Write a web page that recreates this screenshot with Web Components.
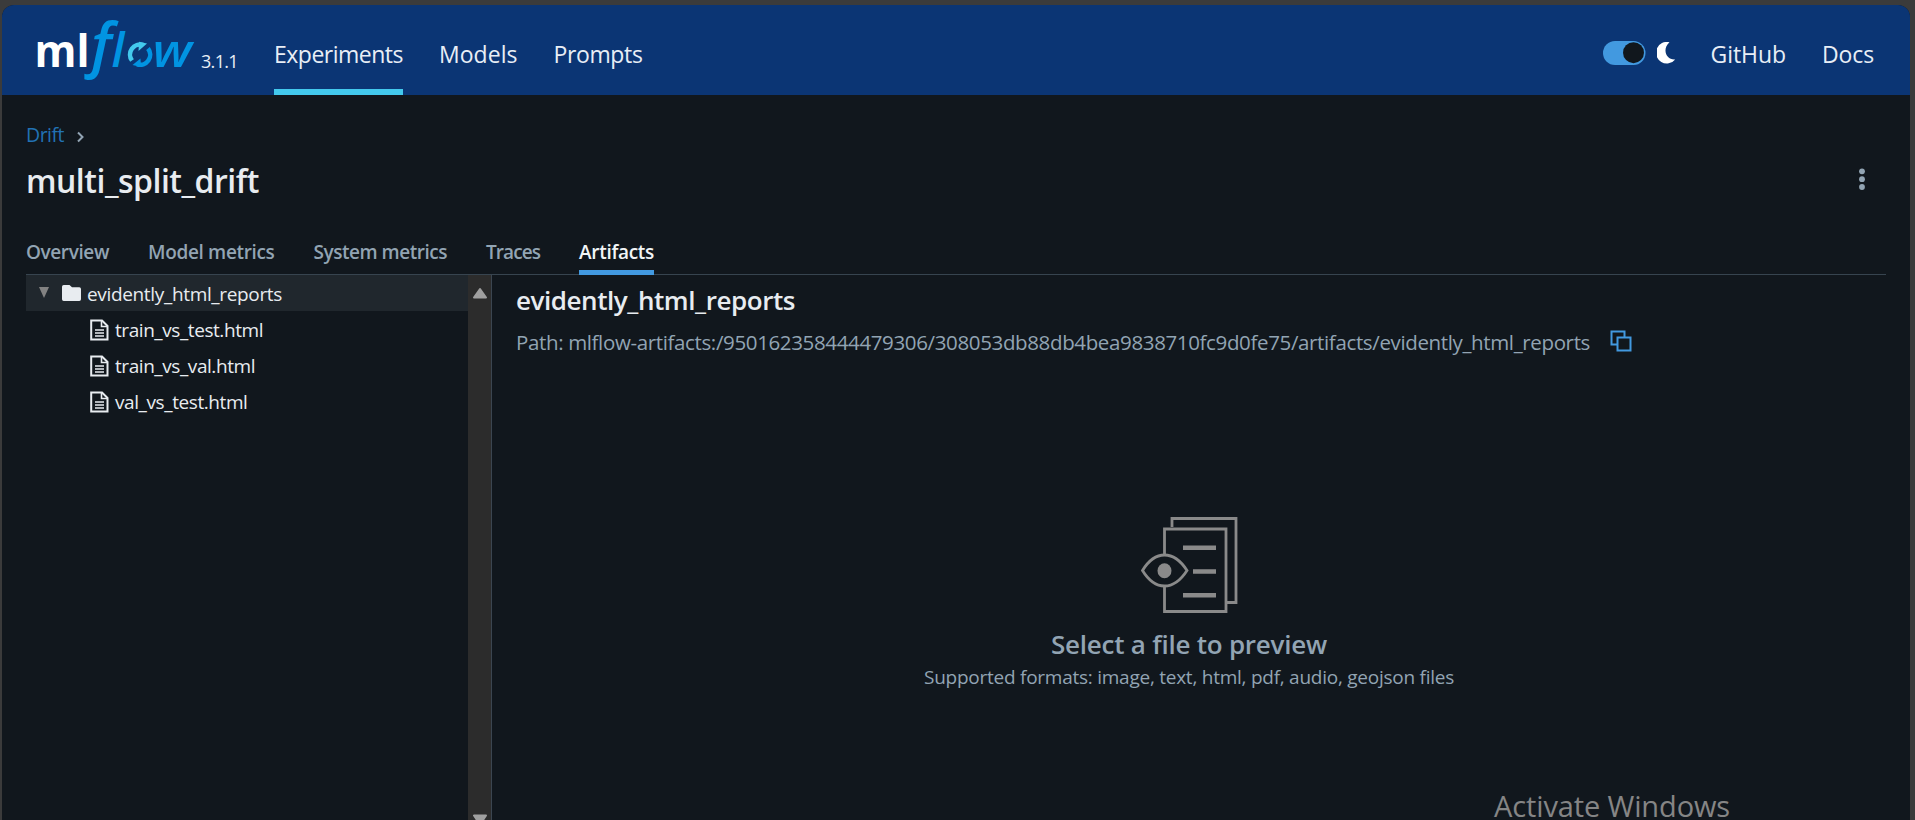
<!DOCTYPE html>
<html lang="en">
<head>
<meta charset="utf-8">
<title>multi_split_drift - MLflow</title>
<style>
html,body{margin:0;height:100%;overflow:hidden;background:#3b3b3b;font-family:"Open Sans","Noto Sans",sans-serif}
</style>
</head>
<body>
<ml-app></ml-app>
<script>
const define=(name,html,ready)=>customElements.define(name,class extends HTMLElement{
  connectedCallback(){
    if(this.shadowRoot)return;
    this.attachShadow({mode:'open'}).innerHTML=html;
    if(ready)ready(this,this.shadowRoot);
  }
});

/* One line of text; spacing is spread so that the line is `w` pixels wide. */
define('fit-text','<style>:host{display:block;white-space:nowrap;flex:none}span{display:inline-block}</style><span><slot></slot></span>',(el,root)=>{
  const span=root.querySelector('span'),w=+el.getAttribute('w'),n=el.textContent.length;
  span.style.letterSpacing=((w-span.getBoundingClientRect().width)/n)+'px';
  el.style.width=w+'px';
});

define('ml-logo',`<style>:host{display:block;width:164px;height:70px;flex:none}svg{display:block;overflow:visible}text{font-family:"Open Sans","Noto Sans",sans-serif}</style>
<svg width="164" height="70" viewBox="34 15 164 70">
<text x="34.500" y="67" font-size="45" font-weight="700" fill="#fff" textLength="55" lengthAdjust="spacingAndGlyphs">ml</text>
<g fill="#0194e2" font-style="italic" font-weight="600">
<text x="91" y="65.500" font-size="60">f</text>
<text x="111.500" y="67" font-size="47">l</text>
<text x="152.500" y="67" font-size="45" textLength="39.500" lengthAdjust="spacingAndGlyphs">w</text></g>
<path d="M132 60.500A10 10 0 0 1 143 45" fill="none" stroke="#43c9ed" stroke-width="4.600"/>
<path fill="#43c9ed" d="M139 41.800 147 43.500 138.500 51z"/>
<path d="M148 48.500A10 10 0 0 1 137 64.200" fill="none" stroke="#0194e2" stroke-width="4.600"/>
<path fill="#0194e2" d="M132.500 65 140.500 58.500 141 67z"/>
</svg>`);

define('ml-header',`<style>
:host{display:flex;box-sizing:border-box;height:90px;background:#0b3574;border-radius:12px 12px 0 0;padding:0 36px 0 32px;color:#e8eef6;font-size:23px;align-items:flex-start}
.tab{height:84px;margin-right:36px;line-height:98px}
.tab.on{border-bottom:6px solid #43c9ed}
ml-logo{margin-top:10px}
.ver{font-size:18px;line-height:112px;margin:0 36px 0 3px}
.grow{flex:1}
.tog{margin:36px 11px 0 0}.moon{margin:37px 35px 0 0}svg{display:block}
.doc{margin-left:36px}
.l{line-height:98px}
</style>
<ml-logo></ml-logo><fit-text class="ver" w="37">3.1.1</fit-text>
<fit-text class="tab on" w="129">Experiments</fit-text><fit-text class="tab" w="78.5">Models</fit-text><fit-text class="tab" w="89">Prompts</fit-text>
<div class="grow"></div>
<svg class="tog" width="43" height="24"><rect width="42.500" height="24" rx="12" fill="#4299e0"/><circle cx="30.500" cy="11.700" r="10.500" fill="#11171d"/></svg>
<svg class="moon" width="19" height="22"><path fill="#fff" d="M12.500.3A10.800 10.800 0 1 0 18.200 17.500C9.500 18.300 4.500 7.500 12.500.3z"/></svg>
<fit-text class="l" w="75.500">GitHub</fit-text><fit-text class="l doc" w="52">Docs</fit-text>`);

define('page-title',`<style>
:host{display:flex;justify-content:space-between;height:134px;padding:0 45px 0 24px}
.crumb{display:flex;height:54px;padding-top:14px;box-sizing:border-box;color:#2272b4;font-size:19.5px;line-height:52px;gap:12px}
.crumb svg{margin-top:22px}
.name{font-size:32px;font-weight:600;color:#e8ecf0;line-height:64px}
.more{margin-top:72px}
</style>
<div><div class="crumb"><fit-text w="38">Drift</fit-text><svg width="9" height="12"><path d="M2 1.500 6.500 6 2 10.500" fill="none" stroke="#92a4b3" stroke-width="2"/></svg></div>
<fit-text class="name" w="233">multi_split_drift</fit-text></div>
<svg class="more" width="6" height="26" fill="#92a4b3"><circle cx="3" cy="4.300" r="2.900"/><circle cx="3" cy="12.200" r="2.900"/><circle cx="3" cy="20" r="2.900"/></svg>`);

define('tab-strip',`<style>
:host{display:flex;box-sizing:border-box;height:46px;margin:0 24px 0 24px;border-bottom:1px solid #37444f;gap:39px;color:#92a4b3;font-size:19px;font-weight:600;line-height:47px}
.on{color:#f2f5f7;height:41px;border-bottom:5px solid #4299e0}
</style>
<fit-text w="83">Overview</fit-text><fit-text w="126.500">Model metrics</fit-text><fit-text w="133.500">System metrics</fit-text><fit-text w="54">Traces</fit-text><fit-text class="on" w="75">Artifacts</fit-text>`);

define('tree-file',`<style>:host{display:flex;height:36px;padding-left:64px;gap:6px;align-items:flex-start}svg{margin-top:7px}slot{display:block}</style>
<svg width="19" height="22" fill="none" stroke="#e8ecf0" stroke-width="2"><path d="M1.200 1.500H12L17.500 7V20.500H1.200z"/><path d="M11.500 2V7.500H17M5 11H14M5 14H14M5 17H14" stroke-width="1.600"/></svg><slot></slot>`);

define('artifact-tree',`<style>
:host{display:flex;width:465px;border-right:1px solid #3b4550;color:#e8ecf0;font-size:19px;line-height:37px}
.list{flex:1}
.dir{display:flex;height:36px;background:#20272d;padding-left:13px;margin-bottom:1px}
.dir fit-text{line-height:38px}
.arrow{margin:12px 13px 0 0}.folder{margin:10px 6px 0 0}
.bar{width:23px;background:#2c2c2c;display:flex;flex-direction:column;justify-content:space-between;align-items:center}
</style>
<div class="list"><div class="dir"><svg class="arrow" width="10" height="11"><path d="M0 0H10L5 11z" fill="#828282"/></svg>
<svg class="folder" width="19" height="17"><path fill="#e8ecf0" d="M1.700 0H7.500L10 2.200H17.300Q19 2.200 19 4V14.300Q19 16 17.300 16H1.700Q0 16 0 14.300V1.700Q0 0 1.700 0z"/></svg>
<fit-text w="195">evidently_html_reports</fit-text></div>
<tree-file><fit-text w="148">train_vs_test.html</fit-text></tree-file><tree-file><fit-text w="140">train_vs_val.html</fit-text></tree-file><tree-file><fit-text w="132.500">val_vs_test.html</fit-text></tree-file></div>
<div class="bar"><svg width="16" height="26"><path d="M8 14 14 22.500H2z" fill="#a0a0a0" stroke="#a0a0a0" stroke-width="2" stroke-linejoin="round"/></svg>
<svg width="16" height="7"><path d="M2 2.500H14L8 11.500z" fill="#a0a0a0" stroke="#a0a0a0" stroke-width="2" stroke-linejoin="round"/></svg></div>`);

define('artifact-view',`<style>
:host{display:flex;flex-direction:column;flex:1;padding-left:24px;color:#92a4b3}
h2{margin:0;font-size:26px;font-weight:600;color:#e8ecf0;line-height:50px;height:50px}
.path{display:flex;font-size:20.500px;line-height:34px;height:36px;gap:20px}.path svg{margin-top:5px}
.empty{display:flex;flex-direction:column;align-items:center;width:1346px;margin-top:156px}
.big{font-size:26px;font-weight:600;line-height:42px;margin-top:9px}
.sub{font-size:19px;line-height:32px;margin-top:-4px}
</style>
<h2><fit-text w="279">evidently_html_reports</fit-text></h2>
<div class="path"><fit-text w="1074">Path: mlflow-artifacts:/950162358444479306/308053db88db4bea9838710fc9d0fe75/artifacts/evidently_html_reports</fit-text>
<svg width="22" height="22" fill="none" stroke="#4299e0" stroke-width="2"><path d="M7 14.500H1.500V1.500H14.500V7"/><path d="M7.500 7.500H20.500V20.500H7.500z"/></svg></div>
<div class="empty">
<svg width="97" height="97" fill="none" stroke="#8a8a8a" stroke-width="2.800"><path d="M31 10V1.500H95V85.500H86"/><path d="M23.500 37V12H85V94.500H23.500V69"/><path d="M1.500 53.500Q11 38 23.500 38T46 53.500Q36 69 23.500 69T1.500 53.500z"/><ellipse cx="23.500" cy="53.700" rx="7" ry="7.500" fill="#8a8a8a" stroke="none"/><path stroke-width="4.500" d="M42 30.700H75M52 54.500H75M42 78.200H75"/></svg>
<fit-text class="big" w="276">Select a file to preview</fit-text>
<fit-text class="sub" w="530">Supported formats: image, text, html, pdf, audio, geojson files</fit-text></div>`);

define('ml-app',`<style>
:host{display:block;box-sizing:border-box;height:100vh;padding:5px 5px 0 2px}
.win{display:flex;flex-direction:column;height:100%;background:#11171d;border-radius:12px 12px 0 0}
.main{display:flex;flex:1;min-height:0;padding-left:24px}
.mark{position:absolute;left:1494px;top:792px;font-size:29px;line-height:28px;color:#858585;font-weight:400}
</style>
<div class="win"><ml-header></ml-header><page-title></page-title><tab-strip></tab-strip><div class="main"><artifact-tree></artifact-tree><artifact-view></artifact-view></div></div>
<fit-text class="mark" w="236">Activate Windows</fit-text>`);
</script>
</body>
</html>
